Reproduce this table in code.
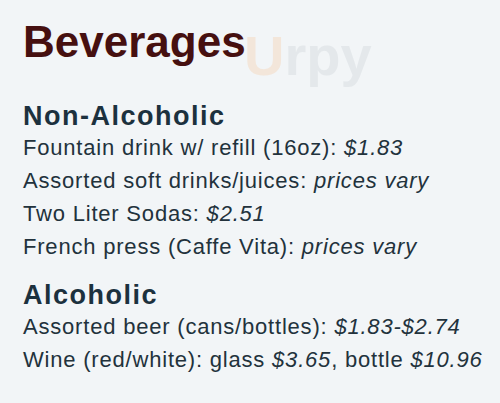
import React from "react";

interface Item {
  name: string;
  price: React.ReactNode;
}

const nonAlcoholic: Item[] = [
  { name: "Fountain drink w/ refill (16oz):", price: <i>$1.83</i> },
  { name: "Assorted soft drinks/juices:", price: <i>prices vary</i> },
  { name: "Two Liter Sodas:", price: <i>$2.51</i> },
  { name: "French press (Caffe Vita):", price: <i>prices vary</i> },
];

const alcoholic: Item[] = [
  { name: "Assorted beer (cans/bottles):", price: <i>$1.83-$2.74</i> },
  {
    name: "Wine (red/white):",
    price: (
      <>
        glass <i>$3.65</i>, bottle <i>$10.96</i>
      </>
    ),
  },
];

function Section({ title, items, className }: { title: string; items: Item[]; className?: string }) {
  return (
    <div className={className}>
      <h2 className="text-[27px] leading-[30px] font-bold tracking-[1.5px] text-[#1c313e]">{title}</h2>
      <ul>
        {items.map((item) => (
          <li key={item.name} className="text-[22px] leading-[33px] tracking-[0.8px] text-[#22323c] whitespace-nowrap">
            {item.name} {item.price}
          </li>
        ))}
      </ul>
    </div>
  );
}

export default function App() {
  return (
    <div
      className="relative w-[500px] h-[403px] overflow-hidden bg-[#f2f5f7] pl-[23px] pt-[18px]"
      style={{ fontFamily: '"Liberation Sans", Arial, sans-serif' }}
    >
      {/* faint watermark behind the title */}
      <div className="absolute left-[244px] top-[14px] text-[56px] font-bold text-[#e4e8eb] select-none">
        <span className="text-[#f3e6da]">U</span>rpy
      </div>

      <div className="relative">
        <h1 className="text-[44px] leading-[48px] font-bold text-[#461010]">Beverages</h1>
        <Section title="Non-Alcoholic" items={nonAlcoholic} className="mt-[35px]" />
        <Section title="Alcoholic" items={alcoholic} className="mt-[17px]" />
      </div>
    </div>
  );
}
